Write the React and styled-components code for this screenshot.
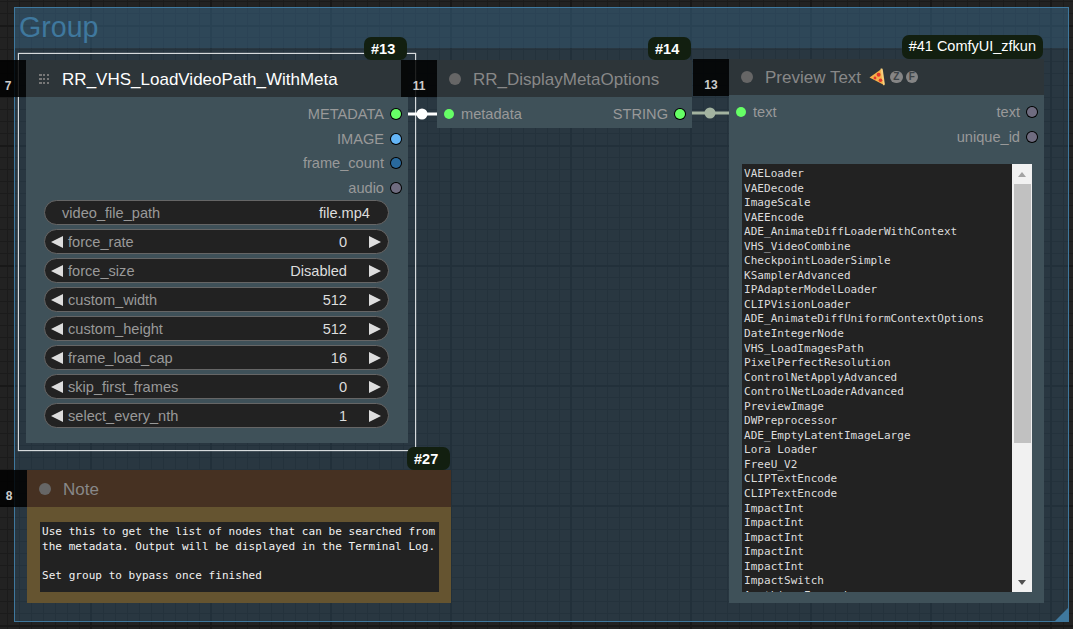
import React from "react";
import styled, { createGlobalStyle } from "styled-components";

const Global = createGlobalStyle`
  html, body { margin: 0; padding: 0; background: #202020; }
  body { font-family: "Liberation Sans", Arial, sans-serif; overflow: hidden; }
`;

const Canvas = styled.div`
  position: relative;
  width: 1073px;
  height: 629px;
  overflow: hidden;
  background-color: #222222;
  background-image:
    linear-gradient(to right, #181818 2px, transparent 2px),
    linear-gradient(to bottom, #181818 2px, transparent 2px),
    linear-gradient(to right, #1b1b1b 1px, transparent 1px),
    linear-gradient(to bottom, #1b1b1b 1px, transparent 1px);
  background-size: 120px 120px, 120px 120px, 12px 12px, 12px 12px;
  background-position: 90px 25px, 90px 25px, 7px 1px, 7px 1px;
`;

const Group = styled.section`
  position: absolute;
  left: 14px;
  top: 7px;
  width: 1055px;
  height: 615px;
  box-sizing: border-box;
  border: 1px solid #3f789e;
  background: rgba(63, 120, 158, 0.25);
`;

const GroupTitle = styled.div`
  height: 40px;
  box-sizing: border-box;
  padding-left: 4px;
  background: rgba(63, 120, 158, 0.25);
  color: #3f789e;
  font-size: 28.6px;
  line-height: 38px;
`;

const GroupCorner = styled.div`
  position: absolute;
  right: 0;
  bottom: 0;
  width: 13px;
  height: 13px;
  background: #3f789e;
  clip-path: polygon(100% 0, 100% 100%, 0 100%);
`;

const Node = styled.div`
  position: absolute;
  left: ${(p) => p.$x}px;
  top: ${(p) => p.$y}px;
  width: ${(p) => p.$w}px;
  display: flex;
  flex-direction: column;
`;

const Selection = styled.div`
  position: absolute;
  inset: -7px -8px -8px -8px;
  border: 1px solid #d6dadc;
  box-shadow: 0 0 1px #d6dadc;
  pointer-events: none;
`;

const TitleBar = styled.header`
  display: flex;
  align-items: center;
  height: ${(p) => p.$h || 37}px;
  box-sizing: border-box;
  padding: ${(p) => (p.$h ? "0" : "1px")} 0 0 12px;
  background: ${(p) => p.$bg || "#2d3539"};
`;

const StatusDot = styled.span`
  flex: none;
  width: 12px;
  height: 12px;
  margin-right: 12px;
  border-radius: 50%;
  background: #666666;
`;

const Grip = styled.span`
  flex: none;
  display: grid;
  grid-template-columns: repeat(3, 2.5px);
  grid-auto-rows: 2.5px;
  gap: 1.3px;
  margin: 0 13px 0 1px;
  i { background: #777; display: block; }
`;

const NodeTitle = styled.span`
  padding-top: 1px;
  color: ${(p) => (p.$bright ? "#ffffff" : "#888888")};
  font-size: 17px;
  white-space: nowrap;
`;

const NodeBody = styled.div`
  position: relative;
  display: flex;
  flex-direction: column;
  box-sizing: border-box;
  height: ${(p) => p.$h}px;
  padding-top: 5px;
  background: ${(p) => p.$bg || "#3f5159"};
`;

const PortRow = styled.div`
  display: flex;
  align-items: center;
  justify-content: space-between;
  height: 24.5px;
  padding: 0 7px;
  color: #999999;
  font-size: 14.6px;
`;

const PortSide = styled.span`
  display: flex;
  align-items: center;
  gap: 7px;
  margin-left: ${(p) => (p.$end ? "auto" : "0")};
`;

const Port = styled.span`
  flex: none;
  width: 10px;
  height: 10px;
  border-radius: 50%;
  background: ${(p) => p.$c};
  box-shadow: ${(p) => (p.$open ? "0 0 0 1px #000" : "none")};
`;

const Widgets = styled.div`
  display: flex;
  flex-direction: column;
  gap: 4px;
  margin: 0 19px 0 18px;
`;

const Widget = styled.div`
  display: flex;
  align-items: center;
  height: 25px;
  box-sizing: border-box;
  padding: ${(p) => (p.$plain ? "0 18px 0 17px" : "0 7px 0 6px")};
  border: 1px solid #666666;
  border-radius: 13px;
  background: #222222;
  font-size: 14.6px;
`;

const Arrow = styled.span`
  flex: none;
  width: 0;
  height: 0;
  border-top: 6px solid transparent;
  border-bottom: 6px solid transparent;
  ${(p) =>
    p.$right
      ? "border-left: 12px solid #dddddd; margin-left: 22px;"
      : "border-right: 12px solid #dddddd; margin-right: 5px;"}
`;

const WidgetLabel = styled.span`
  color: #999999;
`;

const WidgetValue = styled.span`
  margin-left: auto;
  color: #dddddd;
`;

const Tag = styled.div`
  position: absolute;
  bottom: 100%;
  right: 1px;
  min-width: 29px;
  height: ${(p) => (p.$thin ? 24 : 23)}px;
  padding: 0 7px;
  border-radius: 7px;
  background: #121f10;
  color: #ffffff;
  font-size: 14.5px;
  font-weight: ${(p) => (p.$thin ? 400 : 700)};
  line-height: ${(p) => (p.$thin ? 23 : 24)}px;
  white-space: nowrap;
`;

const IdBadge = styled.div`
  position: absolute;
  right: 100%;
  top: 0;
  width: 36px;
  height: 37px;
  box-sizing: border-box;
  padding-top: 18px;
  background: rgba(0, 0, 0, 0.85);
  color: #cccccc;
  font-size: 12px;
  font-weight: 700;
  line-height: 16px;
  text-align: center;
`;

const Paper = styled.div`
  display: flex;
  overflow: hidden;
  height: ${(p) => p.$h}px;
  margin: ${(p) => p.$m};
  background: #222222;
`;

const MonoText = styled.pre`
  flex: 1;
  margin: 0;
  padding: 3px 2px 0;
  overflow: hidden;
  color: ${(p) => p.$c || "#dddddd"};
  font-family: "DejaVu Sans Mono", monospace;
  font-size: 11px;
  letter-spacing: 0.04px;
  line-height: 14.55px;
`;

const Scrollbar = styled.div`
  flex: none;
  width: 20px;
  display: flex;
  flex-direction: column;
  align-items: center;
  background: #f1f1f1;
`;

const ScrollArrow = styled.span`
  flex: none;
  width: 0;
  height: 0;
  margin: ${(p) => (p.$down ? "auto 0 7px" : "8px 0 5px")};
  border-left: 4.5px solid transparent;
  border-right: 4.5px solid transparent;
  ${(p) =>
    p.$down ? "border-top: 5px solid #505050;" : "border-bottom: 5px solid #a3a3a3;"}
`;

const ScrollThumb = styled.span`
  flex: none;
  width: 17px;
  height: 259px;
  margin: 2px 0 0 1px;
  background: #c1c1c1;
`;

const Links = styled.svg`
  position: absolute;
  inset: 0;
  width: 1073px;
  height: 629px;
  pointer-events: none;
`;

const Extras = styled.span`
  display: flex;
  align-items: center;
  margin-left: 8px;
  gap: 3px;
`;

const Pill = styled.span`
  width: 12.5px;
  height: 12.5px;
  border-radius: 50%;
  background: #858585;
  color: #3c4347;
  font-size: 10px;
  font-weight: 700;
  line-height: 12.5px;
  text-align: center;
`;

const Pizza = () => (
  <svg width="16" height="18" viewBox="0 0 16 18" style={{ marginRight: 2 }}>
    <path d="M0.5 9.5 L12.5 1 L15 17 Z" fill="#f5b04a" />
    <path d="M11.5 0.8 C13 0.2 13.6 0.6 13.8 1.8 L15.8 16 C15.8 17.2 15 17.6 14.2 17.2 Z" fill="#f9cf7d" />
    <circle cx="9.6" cy="6.8" r="2" fill="#e2352a" />
    <circle cx="6" cy="10" r="1.4" fill="#e2352a" />
    <circle cx="11.5" cy="12.2" r="1.8" fill="#e2352a" />
  </svg>
);

const Output = ({ name, color }) => (
  <PortRow>
    <PortSide $end>
      {name}
      <Port $c={color} $open />
    </PortSide>
  </PortRow>
);

const WIDGETS = [
  ["force_rate", "0"],
  ["force_size", "Disabled"],
  ["custom_width", "512"],
  ["custom_height", "512"],
  ["frame_load_cap", "16"],
  ["skip_first_frames", "0"],
  ["select_every_nth", "1"],
];

const LIST = `VAELoader
VAEDecode
ImageScale
VAEEncode
ADE_AnimateDiffLoaderWithContext
VHS_VideoCombine
CheckpointLoaderSimple
KSamplerAdvanced
IPAdapterModelLoader
CLIPVisionLoader
ADE_AnimateDiffUniformContextOptions
DateIntegerNode
VHS_LoadImagesPath
PixelPerfectResolution
ControlNetApplyAdvanced
ControlNetLoaderAdvanced
PreviewImage
DWPreprocessor
ADE_EmptyLatentImageLarge
Lora Loader
FreeU_V2
CLIPTextEncode
CLIPTextEncode
ImpactInt
ImpactInt
ImpactInt
ImpactInt
ImpactInt
ImpactSwitch
Anything Everywhere`;

const NOTE = `Use this to get the list of nodes that can be searched from
the metadata. Output will be displayed in the Terminal Log.

Set group to bypass once finished`;

export default function App() {
  return (
    <Canvas>
      <Global />
      <Group>
        <GroupTitle>Group</GroupTitle>
        <GroupCorner />
      </Group>

      <Node $x={26} $y={60} $w={382}>
        <Selection />
        <Tag>#13</Tag>
        <IdBadge>7</IdBadge>
        <TitleBar>
          <Grip>
            {Array.from({ length: 9 }, (_, i) => (
              <i key={i} />
            ))}
          </Grip>
          <NodeTitle $bright>RR_VHS_LoadVideoPath_WithMeta</NodeTitle>
        </TitleBar>
        <NodeBody $h={346}>
          <Output name="METADATA" color="#66ff66" />
          <Output name="IMAGE" color="#64b5f6" />
          <Output name="frame_count" color="#29699c" />
          <Output name="audio" color="#6f6c80" />
          <Widgets>
            <Widget $plain>
              <WidgetLabel>video_file_path</WidgetLabel>
              <WidgetValue>file.mp4</WidgetValue>
            </Widget>
            {WIDGETS.map(([label, value]) => (
              <Widget key={label}>
                <Arrow />
                <WidgetLabel>{label}</WidgetLabel>
                <WidgetValue>{value}</WidgetValue>
                <Arrow $right />
              </Widget>
            ))}
          </Widgets>
        </NodeBody>
      </Node>

      <Node $x={437} $y={60} $w={255}>
        <Tag>#14</Tag>
        <IdBadge>11</IdBadge>
        <TitleBar>
          <StatusDot />
          <NodeTitle>RR_DisplayMetaOptions</NodeTitle>
        </TitleBar>
        <NodeBody $h={31}>
          <PortRow>
            <PortSide>
              <Port $c="#66ff66" />
              metadata
            </PortSide>
            <PortSide $end>
              STRING
              <Port $c="#66ff66" $open />
            </PortSide>
          </PortRow>
        </NodeBody>
      </Node>

      <Node $x={729} $y={59} $w={315}>
        <Tag $thin>#41 ComfyUI_zfkun</Tag>
        <IdBadge>13</IdBadge>
        <TitleBar $h={36}>
          <StatusDot />
          <NodeTitle>Preview Text</NodeTitle>
          <Extras>
            <Pizza />
            <Pill>Z</Pill>
            <Pill>F</Pill>
          </Extras>
        </TitleBar>
        <NodeBody $h={508}>
          <PortRow>
            <PortSide>
              <Port $c="#66ff66" />
              text
            </PortSide>
            <PortSide $end>
              text
              <Port $c="#6f6c80" $open />
            </PortSide>
          </PortRow>
          <Output name="unique_id" color="#6f6c80" />
          <Paper $h={428} $m="15px 12px 0 13px">
            <MonoText>{LIST}</MonoText>
            <Scrollbar>
              <ScrollArrow />
              <ScrollThumb />
              <ScrollArrow $down />
            </Scrollbar>
          </Paper>
        </NodeBody>
      </Node>

      <Node $x={27} $y={470} $w={424}>
        <Tag>#27</Tag>
        <IdBadge>8</IdBadge>
        <TitleBar $bg="#463122">
          <StatusDot />
          <NodeTitle>Note</NodeTitle>
        </TitleBar>
        <NodeBody $h={96} $bg="#655430">
          <Paper $h={70} $m="10px 12px 0 13px">
            <MonoText $c="#f2f2f2">{NOTE}</MonoText>
          </Paper>
        </NodeBody>
      </Node>

      <Links viewBox="0 0 1073 629">
        <line x1="408" y1="114" x2="437" y2="114" stroke="#ffffff" strokeWidth="3" />
        <circle cx="422" cy="114" r="5.5" fill="#ffffff" />
        <line x1="692" y1="113" x2="729" y2="113" stroke="#a3b3a0" strokeWidth="3" />
        <circle cx="710" cy="113" r="5.5" fill="#a3b3a0" />
      </Links>
    </Canvas>
  );
}
